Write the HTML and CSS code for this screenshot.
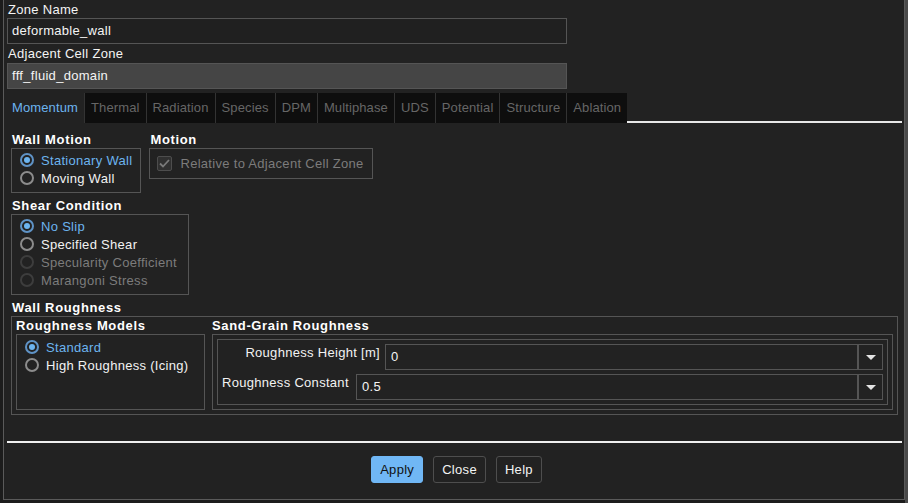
FILE: index.html
```html
<!DOCTYPE html>
<html>
<head>
<meta charset="utf-8">
<title>Wall</title>
<link rel="stylesheet" href="styles.css">
</head>
<body>
<div class="panel">
  <div class="flabel">Zone Name</div>
  <div class="input">deformable_wall</div>
  <div class="flabel flabel-2">Adjacent Cell Zone</div>
  <div class="input input-ro">fff_fluid_domain</div>

  <div class="tabs">
    <div class="tab tab-active">Momentum</div>
    <div class="tab">Thermal</div>
    <div class="tab">Radiation</div>
    <div class="tab">Species</div>
    <div class="tab">DPM</div>
    <div class="tab">Multiphase</div>
    <div class="tab">UDS</div>
    <div class="tab">Potential</div>
    <div class="tab">Structure</div>
    <div class="tab">Ablation</div>
    <div class="tab-fill"></div>
  </div>

  <div class="pane">
    <div class="row1">
      <div class="group">
        <div class="gh">Wall Motion</div>
        <div class="gbox">
          <div class="opt sel"><span class="radio on"></span>Stationary Wall</div>
          <div class="opt"><span class="radio"></span>Moving Wall</div>
        </div>
      </div>
      <div class="group">
        <div class="gh">Motion</div>
        <div class="gbox gbox-motion">
          <div class="opt opt-check dis"><span class="check"><svg width="11" height="9" viewBox="0 0 11 9"><path d="M1 4.5 L4 7.5 L10 1" fill="none" stroke="#7a7a7a" stroke-width="1.8"/></svg></span>Relative to Adjacent Cell Zone</div>
        </div>
      </div>
    </div>

    <div class="group group-gap">
      <div class="gh">Shear Condition</div>
      <div class="gbox gbox-shear">
        <div class="opt sel"><span class="radio on"></span>No Slip</div>
        <div class="opt"><span class="radio"></span>Specified Shear</div>
        <div class="opt dis"><span class="radio off"></span>Specularity Coefficient</div>
        <div class="opt dis"><span class="radio off"></span>Marangoni Stress</div>
      </div>
    </div>

    <div class="group group-gap group-full">
      <div class="gh">Wall Roughness</div>
      <div class="wr-box">
        <div class="wr-col">
          <div class="gh">Roughness Models</div>
          <div class="gbox gbox-rm">
            <div class="opt sel"><span class="radio on"></span>Standard</div>
            <div class="opt"><span class="radio"></span>High Roughness (Icing)</div>
          </div>
        </div>
        <div class="wr-col wr-col-grow">
          <div class="gh">Sand-Grain Roughness</div>
          <div class="sg-box">
            <div class="sg-inner">
              <div class="frow">
                <div class="rlabel rlabel-h">Roughness Height [m]</div>
                <div class="combo">
                  <div class="combo-val">0</div>
                  <div class="combo-btn"><span class="arrow"></span></div>
                </div>
              </div>
              <div class="frow">
                <div class="rlabel rlabel-c">Roughness Constant</div>
                <div class="combo">
                  <div class="combo-val">0.5</div>
                  <div class="combo-btn"><span class="arrow"></span></div>
                </div>
              </div>
            </div>
          </div>
        </div>
      </div>
    </div>
  </div>

  <div class="sep"></div>

  <div class="buttons">
    <div class="btn btn-primary">Apply</div>
    <div class="btn">Close</div>
    <div class="btn">Help</div>
  </div>
</div>
</body>
</html>
```

FILE: styles.css
```css
* { box-sizing: border-box; }

html, body {
  margin: 0;
  padding: 0;
}

body {
  width: 908px;
  height: 503px;
  overflow: hidden;
  background: linear-gradient(to right, #1c1c1c 905px, #4a4a4a 905px);
  font-family: "Liberation Sans", Arial, sans-serif;
  font-size: 13px;
  letter-spacing: 0.3px;
  color: #f2f2f2;
}

.panel {
  margin-left: 3px;
  width: 902px;
  height: 500px;
  background: #222222;
  border: 1px solid #5a5a5a;
  border-top: none;
  padding: 0 2px 0 3px;
  display: flex;
  flex-direction: column;
}

.flabel {
  height: 18px;
  line-height: 17px;
  padding: 1px 0 0 1px;
  color: #f4f4f4;
}

.flabel-2 { height: 19px; }

.input {
  width: 560px;
  height: 26px;
  border: 1px solid #555555;
  background: #202020;
  padding: 0 4px;
  line-height: 24px;
  color: #f4f4f4;
}

.input-ro {
  background: #454545;
}

/* tabs */
.tabs {
  margin-top: 4px;
  height: 30px;
  display: flex;
}

.tab {
  padding: 0 6px;
  line-height: 30px;
  background: #0e0e0e;
  border-left: 1px solid #333333;
  color: #666666;
  white-space: nowrap;
  letter-spacing: 0.12px;
}

.tab-active {
  background: transparent;
  border-left: none;
  color: #6cb4ef;
  padding: 0 6px 0 5px;
}

.tab-fill {
  flex: 1;
  border-bottom: 2px solid #e8e8e8;
}

/* pane */
.pane {
  padding: 9px 0 0 4px;
  display: flex;
  flex-direction: column;
  align-items: flex-start;
}

.row1 {
  display: flex;
  gap: 8px;
  align-items: flex-start;
}

.group {
  display: flex;
  flex-direction: column;
  align-items: flex-start;
}

.group-gap { margin-top: 5px; }

.group-full {
  align-self: stretch;
  align-items: stretch;
  margin-right: 4px;
}

.gh {
  font-weight: bold;
  line-height: 16px;
  padding-left: 1px;
  letter-spacing: 0.65px;
  color: #ffffff;
  white-space: nowrap;
}

.gbox {
  border: 1px solid #555555;
  padding: 2px 8px 5px 8px;
}

.gbox-shear {
  width: 178px;
}

.gbox-motion {
  padding: 4px 8px 5px 7px;
}

.opt {
  height: 18px;
  display: flex;
  align-items: center;
  gap: 7px;
  white-space: nowrap;
  color: #f2f2f2;
}

.opt.sel { color: #6cb4ef; }
.opt.dis { color: #7c7c7c; }

.opt-check {
  height: 20px;
  gap: 8px;
}

.radio {
  width: 14px;
  height: 14px;
  border-radius: 50%;
  border: 2px solid #8c8c8c;
  display: flex;
  align-items: center;
  justify-content: center;
  flex: none;
}

.radio.on { border-color: #5f93c6; }

.radio.on::after {
  content: "";
  width: 6px;
  height: 6px;
  border-radius: 50%;
  background: #6cb4ef;
}

.radio.off { border-color: #3d3d3d; }

.check {
  width: 15px;
  height: 15px;
  border: 1px solid #4d4d4d;
  border-radius: 2px;
  background: #303030;
  display: flex;
  align-items: center;
  justify-content: center;
  flex: none;
}

/* wall roughness */
.wr-box {
  border: 1px solid #555555;
  padding: 1px 4px 4px 4px;
  display: flex;
  gap: 7px;
}

.wr-col {
  display: flex;
  flex-direction: column;
}

.wr-col .gh { padding-left: 0; }

.wr-col-grow { flex: 1; }

.gbox-rm {
  flex: 1;
  width: 189px;
  padding: 3px 9px 0 8px;
}

.sg-box {
  border: 1px solid #555555;
  padding: 4px;
}

.sg-inner {
  border: 1px solid #555555;
  padding: 4px;
  display: flex;
  flex-direction: column;
  gap: 4px;
}

.frow {
  display: flex;
  align-items: flex-start;
}

.rlabel {
  padding-top: 1px;
  line-height: 16px;
  white-space: nowrap;
  color: #f2f2f2;
}

.rlabel-h {
  width: 163px;
  text-align: right;
  padding-right: 5px;
}

.rlabel-c {
  width: 134px;
}

.combo {
  flex: 1;
  height: 26px;
  border: 1px solid #555555;
  display: flex;
}

.combo-val {
  flex: 1;
  padding-left: 5px;
  line-height: 24px;
  color: #f4f4f4;
}

.combo-btn {
  width: 25px;
  border-left: 2px solid #555555;
  display: flex;
  align-items: center;
  justify-content: center;
}

.arrow {
  width: 0;
  height: 0;
  border-left: 5px solid transparent;
  border-right: 5px solid transparent;
  border-top: 5px solid #e4e4e4;
}

/* footer */
.sep {
  margin-top: 26px;
  height: 2px;
  background: #f0f0f0;
}

.buttons {
  margin-top: 13px;
  display: flex;
  justify-content: center;
  gap: 10px;
  padding-left: 4px;
}

.btn {
  height: 27px;
  line-height: 25px;
  padding: 0 8px;
  border: 1px solid #4e4e4e;
  border-radius: 3px;
  color: #f4f4f4;
  background: #222222;
}

.btn-primary {
  background: #70b7f5;
  border-color: #70b7f5;
  color: #111111;
}
```
